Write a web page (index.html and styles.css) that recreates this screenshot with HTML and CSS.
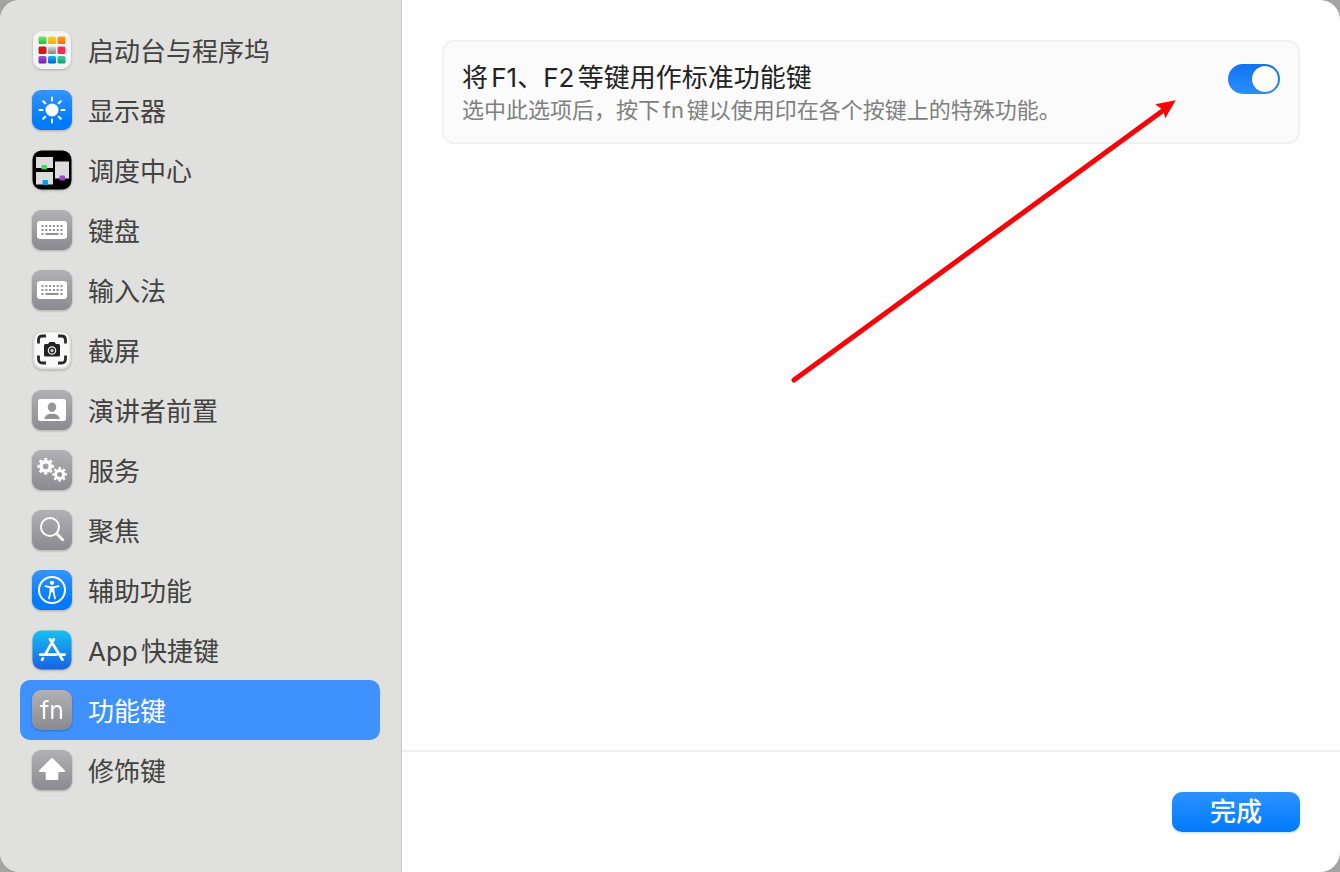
FILE: index.html
```html
<!DOCTYPE html>
<html lang="zh-CN">
	<head>
		<meta charset="utf-8">
		<title>功能键</title>
		<link rel="stylesheet" href="styles.css">
	</head>
	<body>
		<!-- gradients and shapes shared by the icons -->
		<svg class="defs" width="0" height="0" aria-hidden="true">
			<defs>
				<linearGradient id="gray" x1="0" y1="0" x2="0" y2="1">
					<stop offset="0" stop-color="#b1b0b5"/>
					<stop offset="1" stop-color="#8b8a90"/>
				</linearGradient>
				<linearGradient id="blue" x1="0" y1="0" x2="0" y2="1">
					<stop offset="0" stop-color="#3395ff"/>
					<stop offset="0.8" stop-color="#007aff"/>
				</linearGradient>
				<linearGradient id="store" x1="0" y1="0" x2="0" y2="1">
					<stop offset="0" stop-color="#18bff4"/>
					<stop offset="1" stop-color="#1761e2"/>
				</linearGradient>
				<linearGradient id="green" x1="0" y1="0" x2="0" y2="1"><stop offset="0" stop-color="#7be860"/><stop offset="1" stop-color="#17c63c"/></linearGradient>
				<linearGradient id="yellow" x1="0" y1="0" x2="0" y2="1"><stop offset="0" stop-color="#ffd02e"/><stop offset="1" stop-color="#ffa913"/></linearGradient>
				<linearGradient id="orange" x1="0" y1="0" x2="0" y2="1"><stop offset="0" stop-color="#ffa01f"/><stop offset="1" stop-color="#ee710c"/></linearGradient>
				<linearGradient id="silver" x1="0" y1="0" x2="0" y2="1"><stop offset="0" stop-color="#d5d9dc"/><stop offset="1" stop-color="#7d8489"/></linearGradient>
				<linearGradient id="purple" x1="0" y1="0" x2="0" y2="1"><stop offset="0" stop-color="#a852d6"/><stop offset="1" stop-color="#6c1fa6"/></linearGradient>
				<linearGradient id="sky" x1="0" y1="0" x2="0" y2="1"><stop offset="0" stop-color="#13b9f5"/><stop offset="1" stop-color="#0757d5"/></linearGradient>
				<linearGradient id="teal" x1="0" y1="0" x2="0" y2="1"><stop offset="0" stop-color="#3ed0a3"/><stop offset="1" stop-color="#0f9a74"/></linearGradient>
				<g id="keyboard">
					<rect x="5" y="11" width="30" height="18" rx="3" fill="#fff"/>
					<path d="M9.500 16h21M9.500 20h21" stroke="#929197" stroke-width="2" stroke-dasharray="2 1.800"/>
					<path d="M9.500 24h2M13.500 24h13M28.500 24h2" stroke="#929197" stroke-width="2"/>
				</g>
			</defs>
		</svg>

		<div class="window">
			<nav class="sidebar">
				<a class="item" href="#dock">
					<svg class="icon" viewBox="0 0 40 40" aria-hidden="true">
						<rect x="1" y="1" width="38" height="38" rx="9" fill="#f4f4f4"/>
						<rect x="6.500" y="6.500" width="8" height="7.500" rx="1.500" fill="url(#green)"/>
						<rect x="16" y="6.500" width="8" height="7.500" rx="1.500" fill="url(#yellow)"/>
						<rect x="25.500" y="6.500" width="8" height="7.500" rx="1.500" fill="url(#orange)"/>
						<rect x="6.500" y="16.500" width="8" height="7.500" rx="1.500" fill="#d21c17"/>
						<rect x="16" y="16.500" width="8" height="7.500" rx="1.500" fill="url(#silver)"/>
						<rect x="25.500" y="16.500" width="8" height="7.500" rx="1.500" fill="#fb2a52"/>
						<rect x="6.500" y="26" width="8" height="7.500" rx="1.500" fill="url(#purple)"/>
						<rect x="16" y="26" width="8" height="7.500" rx="1.500" fill="url(#sky)"/>
						<rect x="25.500" y="26" width="8" height="7.500" rx="1.500" fill="url(#teal)"/>
					</svg>
					<span class="name">启动台与程序坞</span>
				</a>
				<a class="item" href="#display">
					<svg class="icon" viewBox="0 0 40 40" aria-hidden="true">
						<rect width="40" height="40" rx="9" fill="url(#blue)"/>
						<circle cx="20" cy="20" r="6.500" fill="#fff"/>
						<path d="M20 7.500v3M20 29.500v3M7.500 20h3M29.500 20h3M11.200 11.200l2.100 2.100M26.700 26.700l2.100 2.100M28.800 11.200l-2.100 2.100M13.300 26.700l-2.100 2.100" stroke="#fff" stroke-width="2" stroke-linecap="round"/>
					</svg>
					<span class="name">显示器</span>
				</a>
				<a class="item" href="#mission">
					<svg class="icon" viewBox="0 0 40 40" aria-hidden="true">
						<rect x="0.500" y="0.500" width="39" height="39" rx="9" fill="#000"/>
						<path d="M4 7h17v11H4zM4 22h17v12.500H4zM23 11.500h14v17H23z" fill="#dcdcdc"/>
						<rect x="9.500" y="15" width="5.500" height="4.500" rx="1" fill="#3fdd49"/>
						<rect x="10.500" y="30" width="5.500" height="5" rx="1" fill="#0a9bf5"/>
						<rect x="27.500" y="25.500" width="5.500" height="5" rx="1" fill="#9a45d3"/>
					</svg>
					<span class="name">调度中心</span>
				</a>
				<a class="item" href="#keyboard-keys">
					<svg class="icon" viewBox="0 0 40 40" aria-hidden="true">
						<rect width="40" height="40" rx="9" fill="url(#gray)"/>
						<use href="#keyboard"/>
					</svg>
					<span class="name">键盘</span>
				</a>
				<a class="item" href="#input">
					<svg class="icon" viewBox="0 0 40 40" aria-hidden="true">
						<rect width="40" height="40" rx="9" fill="url(#gray)"/>
						<use href="#keyboard"/>
					</svg>
					<span class="name">输入法</span>
				</a>
				<a class="item" href="#screenshot">
					<svg class="icon" viewBox="0 0 40 40" aria-hidden="true">
						<rect x="1" y="1.500" width="38" height="38" rx="9" fill="#dcdcdc"/>
						<rect x="2.500" y="2.500" width="35" height="35" rx="8" fill="#f8f8f8"/>
						<path d="M6.500 13.500V10q0-4 4-4H14M26 6h3.500q4 0 4 4v3.500M33.500 25.500V29q0 4-4 4H26M14 33h-3.500q-4 0-4-4v-3.500" fill="none" stroke="#2a2a2a" stroke-width="2.800"/>
						<path d="M12 15.500q0-1.500 1.500-1.500H16l1.500-2h5l1.500 2h2.500q1.500 0 1.500 1.500V25q0 1.500-1.500 1.500h-13Q12 26.500 12 25z" fill="#222"/>
						<circle cx="20" cy="20.500" r="3.700" fill="#333" stroke="#eee" stroke-width="1.200"/>
						<circle cx="20" cy="20.500" r="1.500" fill="#ddd"/>
					</svg>
					<span class="name">截屏</span>
				</a>
				<a class="item" href="#presenter">
					<svg class="icon" viewBox="0 0 40 40" aria-hidden="true">
						<rect width="40" height="40" rx="9" fill="url(#gray)"/>
						<rect x="6" y="9" width="28" height="22" rx="2.500" fill="#fff"/>
						<ellipse cx="20" cy="17.200" rx="4.200" ry="4.800" fill="#97969c"/>
						<path d="M12.200 29q1.200-5.300 7.800-5.300t7.800 5.300z" fill="#929197"/>
					</svg>
					<span class="name">演讲者前置</span>
				</a>
				<a class="item" href="#services">
					<svg class="icon" viewBox="0 0 40 40" aria-hidden="true">
						<rect width="40" height="40" rx="9" fill="url(#gray)"/>
						<g fill="none" stroke="#fff">
							<circle cx="13.700" cy="16.300" r="4.700" stroke-width="3.600"/>
							<circle cx="13.700" cy="16.300" r="7.200" stroke-width="2.400" pathLength="16" stroke-dasharray="1 1" stroke-dashoffset="0.500"/>
							<circle cx="27.600" cy="24.400" r="4" stroke-width="3"/>
							<circle cx="27.600" cy="24.400" r="6.200" stroke-width="2.200" pathLength="16" stroke-dasharray="1 1" stroke-dashoffset="0.500"/>
						</g>
					</svg>
					<span class="name">服务</span>
				</a>
				<a class="item" href="#spotlight">
					<svg class="icon" viewBox="0 0 40 40" aria-hidden="true">
						<rect width="40" height="40" rx="9" fill="url(#gray)"/>
						<circle cx="18" cy="17" r="9" fill="none" stroke="#fff" stroke-width="2"/>
						<path d="M24.800 23.800l5.900 6" stroke="#fff" stroke-width="2.800" stroke-linecap="round"/>
					</svg>
					<span class="name">聚焦</span>
				</a>
				<a class="item" href="#accessibility">
					<svg class="icon" viewBox="0 0 40 40" aria-hidden="true">
						<rect width="40" height="40" rx="9" fill="url(#blue)"/>
						<circle cx="20" cy="20" r="13" fill="none" stroke="#fff" stroke-width="2"/>
						<circle cx="20" cy="12.800" r="2.100" fill="#fff"/>
						<path d="M13.500 16.200l4.700 1.100h3.600l4.700-1.100M17 28.500l1.400-6.500M23 28.500L21.600 22" fill="none" stroke="#fff" stroke-width="1.700" stroke-linecap="round"/>
						<path d="M17.700 16.500h4.600l.2 6.300-2-.5h-1l-2 .5z" fill="#fff"/>
					</svg>
					<span class="name">辅助功能</span>
				</a>
				<a class="item" href="#app">
					<svg class="icon" viewBox="0 0 40 40" aria-hidden="true">
						<rect x="0.500" y="0.500" width="39" height="39" rx="9" fill="url(#store)"/>
						<path d="M21.800 9.200L13.800 23.500M18 9.200l12.500 20.500M8.200 24.600h16.300M29.500 24.600h3.200M11 28.300l-.9 1.500" stroke="#fff" stroke-width="2.700" stroke-linecap="round"/>
					</svg>
					<span class="name">App快捷键</span>
				</a>
				<a class="item selected" href="#fn" aria-current="page">
					<span class="icon fn" aria-hidden="true">fn</span>
					<span class="name">功能键</span>
				</a>
				<a class="item" href="#modifier">
					<svg class="icon" viewBox="0 0 40 40" aria-hidden="true">
						<rect width="40" height="40" rx="9" fill="url(#gray)"/>
						<path d="M20 9L32 21H25.300v8H14.700v-8H8z" fill="#fff" stroke="#fff" stroke-width="2" stroke-linejoin="round"/>
					</svg>
					<span class="name">修饰键</span>
				</a>
			</nav>

			<main class="content">
				<div class="pane">
					<div class="card">
						<div class="text">
							<label class="title" for="fnkeys">将F1、F2等键用作标准功能键</label>
							<div class="hint" id="hint">选中此选项后，按下fn键以使用印在各个按键上的特殊功能。</div>
						</div>
						<input class="switch" id="fnkeys" type="checkbox" aria-describedby="hint" checked>
					</div>
				</div>
				<div class="footer">
					<button class="done" type="button">完成</button>
				</div>
				<svg class="arrow" viewBox="0 0 386 286" width="386" height="286" aria-hidden="true">
					<path d="M4 282L371 14" stroke="#fb0207" stroke-width="5" stroke-linecap="round"/>
					<path d="M385.700 2.300L365.300 6.300L371 10.500L370 14L373.500 14L375.300 20.300z" fill="#fb0207"/>
				</svg>
			</main>
		</div>
	</body>
</html>
```
FILE: styles.css
```css
* {
	box-sizing: border-box;
}
body {
	margin: 0;
	background: #a3a3a3;
	font-family: Inter, "Noto Sans CJK SC", sans-serif;
	font-size: 26px;
	text-autospace: normal;
}
.defs {
	position: absolute;
}
.window {
	display: flex;
	min-height: 100vh;
	border-radius: 20px;
	overflow: hidden;
	background: #fff;
}
.sidebar {
	flex: 0 0 30%;
	padding: 20px 21px 20px 20px;
	background: #e0e0de;
	border-right: 1px solid #c8c8c6;
}
.item {
	display: flex;
	align-items: center;
	gap: 16px;
	height: 60px;
	padding: 0 12px;
	border-radius: 10px;
	color: #424241;
	line-height: 36px;
	text-decoration: none;
}
.item.selected {
	background: #3f92fe;
	color: #fff;
}
.name {
	padding-top: 3px;
}
.icon {
	flex: none;
	width: 40px;
	height: 40px;
	filter: drop-shadow(0 1px 1px rgba(0, 0, 0, .25));
}
.fn {
	border-radius: 9px;
	background: linear-gradient(#b1b0b5, #8b8a90);
	color: #fff;
	font-size: 25px;
	line-height: 40px;
	text-align: center;
}
.content {
	position: relative;
	flex: 1;
	display: flex;
	flex-direction: column;
}
.pane {
	flex: 1;
	padding: 40px;
}
.card {
	display: flex;
	justify-content: space-between;
	align-items: flex-start;
	padding: 19px 18px 17px;
	border: 2px solid #f1f1f1;
	border-radius: 12px;
	background: #fbfbfb;
}
.title {
	display: block;
	color: #222;
	line-height: 34px;
}
.hint {
	color: #808080;
	font-size: 22px;
	line-height: 30px;
}
.switch {
	appearance: none;
	flex: none;
	display: flex;
	justify-content: flex-end;
	width: 52px;
	height: 30px;
	margin: 3px 0 0;
	padding: 2px;
	border-radius: 15px;
	background: linear-gradient(#0f74f0, #2b8fff);
}
.switch::before {
	content: "";
	width: 26px;
	height: 26px;
	border-radius: 50%;
	background: #fff;
	box-shadow: 0 0 2px rgba(0, 0, 0, .3);
}
.switch:not(:checked) {
	justify-content: flex-start;
	background: #d5d5d5;
}
.footer {
	display: flex;
	justify-content: flex-end;
	padding: 40px;
	border-top: 2px solid #f0f0f0;
}
.done {
	width: 128px;
	height: 40px;
	padding: 0;
	border: 0;
	border-radius: 10px;
	background: linear-gradient(#2d91ff, #007aff);
	box-shadow: 0 1px 3px rgba(0, 122, 255, .25);
	color: #fff;
	font-family: inherit;
	font-size: 26px;
	font-weight: 500;
	line-height: 38px;
}
/* red pointer lying over the page */
.arrow {
	position: absolute;
	top: 98px;
	right: 164px;
	pointer-events: none;
}
```
